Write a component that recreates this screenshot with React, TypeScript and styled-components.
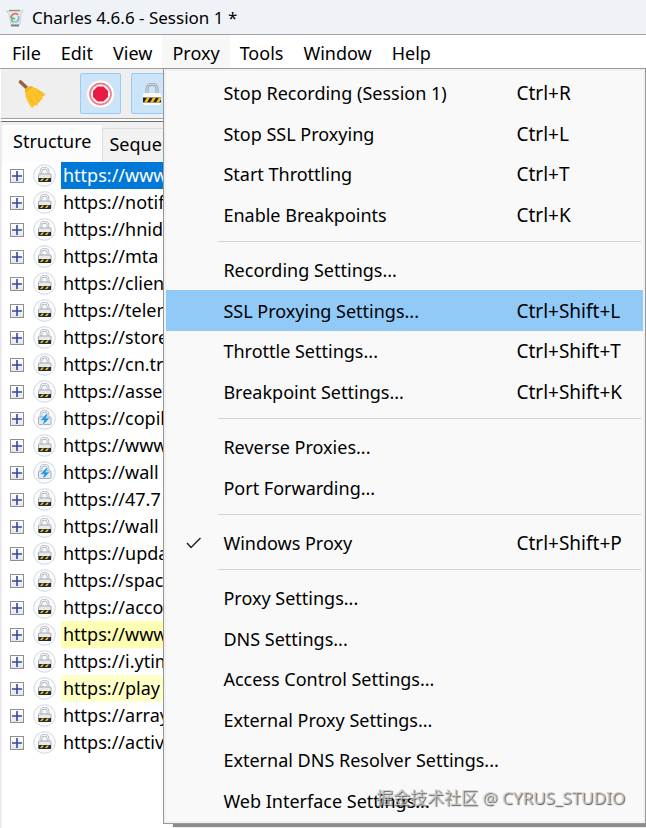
import React from "react";
import styled, { createGlobalStyle, css } from "styled-components";

const GlobalStyle = createGlobalStyle`
  * { box-sizing: border-box; }
  body {
    margin: 0;
    background: #fff;
    color: #000;
    font-family: "Noto Sans", "Open Sans", sans-serif;
    overflow: hidden;
  }
  button { font: inherit; color: inherit; }
`;

const Window = styled.div`
  position: relative;
  display: flex;
  flex-direction: column;
  min-height: 100vh;
`;

const TitleBar = styled.header`
  display: flex;
  align-items: center;
  gap: 8px;
  height: 35px;
  padding: 1px 6px 0;
  background: #eff3f8;
  border-bottom: 1px solid #a0a0a0;
`;

const Title = styled.h1`
  margin: 0;
  font-size: 17px;
  font-weight: 400;
  line-height: 24px;
`;

const MenuBar = styled.nav`
  display: flex;
  height: 34px;
  padding-left: 2px;
  border-bottom: 1px solid #a0a0a0;
`;

const MenuSlot = styled.div`
  position: relative;
  display: flex;
`;

const MenuTitle = styled.button<{ $open?: boolean }>`
  padding: 2px 10px 0;
  border: 0;
  background: ${(p) => (p.$open ? "#f7f7f7" : "transparent")};
  font-size: 18px;
  line-height: 30px;
`;

const MenuPopup = styled.div`
  position: absolute;
  z-index: 2;
  top: 100%;
  left: 1px;
  width: calc(100vw - 163px);
  padding: 4px 2px 2px;
  border: 1px solid #989898;
  background: #f9f9f9;
  box-shadow: inset 0 0 0 2px #f1f1f1, 10px 3px 1px #8c8c8e;
`;

const MenuGroup = styled.div`
  display: grid;
  grid-auto-rows: 40px 41px;

  & + & {
    position: relative;
    margin-top: 15px;
  }

  & + &::before {
    content: "";
    position: absolute;
    top: -9px;
    left: 52px;
    right: 2px;
    height: 1px;
    background: #d4d4d4;
  }
`;

const MenuItem = styled.button<{ $active?: boolean }>`
  display: grid;
  grid-template-columns: 57px 1fr 127px;
  align-items: center;
  padding: 0;
  border: 0;
  background: ${(p) => (p.$active ? "#91c9f7" : "transparent")};
  font-size: 18px;
  line-height: 24px;
  text-align: left;
  white-space: nowrap;
`;

const Shortcut = styled.span`
  font-size: 19px;
`;

const CheckSlot = styled.span`
  display: flex;
  padding-left: 20px;
`;

const Toolbar = styled.div`
  display: flex;
  align-items: center;
  gap: 10px;
  height: 50px;
  margin-left: 1px;
  padding-left: 10px;
  background: #efefef;
  border-bottom: 1px solid #a0a0a0;
`;

const ToolButton = styled.button<{ $on?: boolean }>`
  display: flex;
  align-items: center;
  justify-content: center;
  width: 41px;
  height: 41px;
  padding: 0;
  border: 1px solid ${(p) => (p.$on ? "#98ccf5" : "transparent")};
  border-radius: 2px;
  background: ${(p) => (p.$on ? "#cce4f9" : "transparent")};

  &:first-child { margin-right: 18px; }
`;

const Workspace = styled.main`
  flex: 1;
  display: flex;
  flex-direction: column;
  margin-top: 2px;
  border-top: 1px solid #6e6e6e;
  border-left: 2px solid #ececec;
`;

const Tabs = styled.div`
  display: flex;
  align-items: flex-end;
  height: 40px;
  padding-top: 3px;
  background: #f0f0f0;
`;

const Tab = styled.button<{ $selected?: boolean }>`
  border: 0;
  font-size: 18px;
  line-height: 24px;
  ${(p) =>
    p.$selected
      ? css`
          height: 37px;
          padding: 0 11px 5px;
          background: #fcfcfc;
        `
      : css`
          height: 34px;
          padding: 0 8px 3px 6px;
          border: 1px solid #dedede;
          border-bottom: 0;
          background: #f2f2f2;
        `}
`;

const Tree = styled.ul`
  margin: 0;
  padding: 0 0 0 8px;
  list-style: none;
`;

const TreeRow = styled.li`
  display: flex;
  align-items: center;
  height: 27px;
`;

const Expander = styled.button`
  display: flex;
  width: 14px;
  height: 14px;
  margin-right: 9px;
  padding: 0;
  border: 1px solid #8e8f94;
  background: linear-gradient(#fff, #e4e6ea);
`;

const HostIcon = styled.span`
  display: flex;
  width: 28px;
`;

const Host = styled.span<{ $tone?: string }>`
  flex: 1;
  padding-left: 2px;
  font-size: 18px;
  line-height: 27px;
  white-space: nowrap;
  ${(p) => p.$tone === "selected" && css`background: #0078d7; color: #fff;`}
  ${(p) => p.$tone === "recent" && css`background: #ffffb4;`}
  ${(p) => p.$tone === "fading" && css`background: #ffffc8;`}
`;

const Watermark = styled.div`
  position: absolute;
  z-index: 3;
  right: 21px;
  bottom: 17px;
  color: rgba(205, 205, 205, 0.8);
  font-family: "Noto Sans", "Noto Sans CJK SC", sans-serif;
  font-size: 17px;
  line-height: 26px;
  text-shadow: 1px 1px 1px rgba(0, 0, 0, 0.65);
  pointer-events: none;
`;

const JugIcon = () => (
  <svg width="18" height="20" viewBox="0 0 18 20" aria-hidden="true">
    <path d="M2 3h13l2-1-2 5-1 10H5L3 6 0 3z" fill="#e4e8e6" stroke="#c5cac8" strokeWidth=".7" />
    <path d="M3 2.5h11" stroke="#8d9892" strokeWidth="1.4" />
    <path d="M5 17.5h8" stroke="#79827e" strokeWidth="2" />
    <path d="M5 10c0-4 5-6 7-3" fill="none" stroke="#e25d5d" strokeWidth="1.5" />
    <path d="M12.5 8c1 4-1 6-4 6" fill="none" stroke="#78b4dc" strokeWidth="1.5" />
    <path d="M8 14c-2 0-3-2-2-4l3 1" fill="none" stroke="#55b877" strokeWidth="1.5" />
  </svg>
);

const BroomIcon = () => (
  <svg width="30" height="30" viewBox="0 0 30 30" aria-hidden="true">
    <path d="M3.500 3 11 10" stroke="#98633f" strokeWidth="3.6" strokeLinecap="round" />
    <path d="M8 12c0-3 4-6 7-4 5 1 10 4 14 8l-3 1c0 3-2 5-4 6l-2 4-2-1-3 3c-3-4-7-10-7-17z" fill="#fcc32c" />
    <path d="M12 17c1 3 3 6 5 9M17 15c2 3 4 5 5 8M20 12c2 1 4 3 6 5" fill="none" stroke="#efaa20" strokeWidth=".8" />
    <path d="M8.500 13c1-2 4-5 7-5" fill="none" stroke="#f0a51e" strokeWidth="1.500" />
  </svg>
);

const RecordIcon = () => (
  <svg width="30" height="30" viewBox="0 0 30 30" aria-hidden="true">
    <circle cx="14.5" cy="15" r="14" fill="#fff" stroke="#dfe3e8" />
    <circle cx="14.5" cy="15" r="10.5" fill="#fff" stroke="#f0808c" strokeWidth="1.8" />
    <path d="M11.5 7.500h6l4.500 4.500v6l-4.500 4.500h-6L7 18v-6z" fill="#ea1a42" />
  </svg>
);

const PadlockIcon = () => (
  <svg width="20" height="24" viewBox="0 0 20 24" aria-hidden="true">
    <path d="M5 12V7c0-6.500 10-6.500 10 0v5" fill="none" stroke="#929bab" strokeWidth="3" />
    <path d="M5 12V7c0-6.500 10-6.500 10 0v5" fill="none" stroke="#dce1e9" strokeWidth="1.200" />
    <rect x="1" y="11" width="18" height="12" rx="1.500" fill="#fafafa" />
    <path d="M1 15.500h18v5H1z" fill="#222" />
    <path d="m2 20.500 3-5h3l-3 5zm6 0 3-5h3l-3 5zm6 0 3-5h2v2l-2 3z" fill="#f4bd22" />
  </svg>
);

const SecureHostIcon = ({ active }: { active?: boolean }) => (
  <svg width="24" height="24" viewBox="0 0 24 24" aria-hidden="true">
    <circle cx="11.5" cy="11.5" r="10.8" fill="#fafbfc" stroke="#cdd1dc" strokeWidth=".9" />
    <path d="M8 10.500V7.500c0-4.500 7-4.500 7 0v3" fill="none" stroke="#a2a7b0" strokeWidth="2.500" />
    <path d="M8 10.500V7.500c0-4.500 7-4.500 7 0v3" fill="none" stroke="#f3f5fa" strokeWidth="1.200" />
    <rect x="5.500" y="10" width="12.500" height="7.500" rx=".8" fill="#e8e9eb" stroke="#a0a3a9" strokeWidth=".9" />
    {active ? (
      <path d="m13 7-6 6.500h4l-2 5.500 8-8h-4l2-4.500z" fill="#249ae8" stroke="#d9f0ff" strokeWidth=".6" />
    ) : (
      <>
        <path d="M5.500 14h12.500v4H5.500z" fill="#292a29" />
        <path d="m7 17 2-2.500h2L9 17zm5 0 2-2.500h2L14 17z" fill="#f0ce32" />
      </>
    )}
  </svg>
);

const menuTitles = ["File", "Edit", "View", "Proxy", "Tools", "Window", "Help"];

type Item = { label: string; keys?: string; checked?: boolean; active?: boolean };

const proxyMenu: Item[][] = [
  [
    { label: "Stop Recording (Session 1)", keys: "Ctrl+R" },
    { label: "Stop SSL Proxying", keys: "Ctrl+L" },
    { label: "Start Throttling", keys: "Ctrl+T" },
    { label: "Enable Breakpoints", keys: "Ctrl+K" },
  ],
  [
    { label: "Recording Settings..." },
    { label: "SSL Proxying Settings...", keys: "Ctrl+Shift+L", active: true },
    { label: "Throttle Settings...", keys: "Ctrl+Shift+T" },
    { label: "Breakpoint Settings...", keys: "Ctrl+Shift+K" },
  ],
  [{ label: "Reverse Proxies..." }, { label: "Port Forwarding..." }],
  [{ label: "Windows Proxy", keys: "Ctrl+Shift+P", checked: true }],
  [
    { label: "Proxy Settings..." },
    { label: "DNS Settings..." },
    { label: "Access Control Settings..." },
    { label: "External Proxy Settings..." },
    { label: "External DNS Resolver Settings..." },
    { label: "Web Interface Settings..." },
  ],
];

type HostEntry = { url: string; tone?: string; active?: boolean };

const hosts: HostEntry[] = [
  { url: "https://www.", tone: "selected" },
  { url: "https://notif" },
  { url: "https://hnid" },
  { url: "https://mta" },
  { url: "https://client" },
  { url: "https://telem" },
  { url: "https://store" },
  { url: "https://cn.tr" },
  { url: "https://asset" },
  { url: "https://copil", active: true },
  { url: "https://www." },
  { url: "https://wall", active: true },
  { url: "https://47.7" },
  { url: "https://wall" },
  { url: "https://upda" },
  { url: "https://spac" },
  { url: "https://acco" },
  { url: "https://www.", tone: "recent" },
  { url: "https://i.ytim" },
  { url: "https://play", tone: "fading" },
  { url: "https://array" },
  { url: "https://activ" },
];

const ProxyMenu = () => (
  <MenuPopup role="menu" aria-label="Proxy">
    {proxyMenu.map((group) => (
      <MenuGroup key={group[0].label} role="group">
        {group.map((item) => (
          <MenuItem
            key={item.label}
            role={item.checked ? "menuitemcheckbox" : "menuitem"}
            aria-checked={item.checked}
            $active={item.active}
          >
            <CheckSlot>
              {item.checked && (
                <svg width="16" height="14" viewBox="0 0 16 14" aria-hidden="true">
                  <path d="m1 7 4 4.500L14.500 2" fill="none" stroke="#222" strokeWidth="1.500" />
                </svg>
              )}
            </CheckSlot>
            <span>{item.label}</span>
            <Shortcut>{item.keys}</Shortcut>
          </MenuItem>
        ))}
      </MenuGroup>
    ))}
  </MenuPopup>
);

export default function App() {
  return (
    <>
      <GlobalStyle />
      <Window>
        <TitleBar>
          <JugIcon />
          <Title>Charles 4.6.6 - Session 1 *</Title>
        </TitleBar>
        <MenuBar>
          {menuTitles.map((title) => (
            <MenuSlot key={title}>
              <MenuTitle $open={title === "Proxy"}>{title}</MenuTitle>
              {title === "Proxy" && <ProxyMenu />}
            </MenuSlot>
          ))}
        </MenuBar>
        <Toolbar>
          <ToolButton aria-label="Clear session"><BroomIcon /></ToolButton>
          <ToolButton $on aria-label="Recording"><RecordIcon /></ToolButton>
          <ToolButton $on aria-label="SSL proxying"><PadlockIcon /></ToolButton>
        </Toolbar>
        <Workspace>
          <Tabs role="tablist">
            <Tab role="tab" aria-selected $selected>Structure</Tab>
            <Tab role="tab" aria-selected={false}>Sequence</Tab>
          </Tabs>
          <Tree>
            {hosts.map((host, i) => (
              <TreeRow key={i}>
                <Expander aria-label="Expand">
                  <svg width="12" height="12" viewBox="0 0 12 12" aria-hidden="true">
                    <path d="M6 1v10M1 6h10" stroke="#34499a" strokeWidth="1.600" />
                  </svg>
                </Expander>
                <HostIcon><SecureHostIcon active={host.active} /></HostIcon>
                <Host $tone={host.tone}>{host.url}</Host>
              </TreeRow>
            ))}
          </Tree>
        </Workspace>
        <Watermark>掘金技术社区 @ CYRUS_STUDIO</Watermark>
      </Window>
    </>
  );
}
